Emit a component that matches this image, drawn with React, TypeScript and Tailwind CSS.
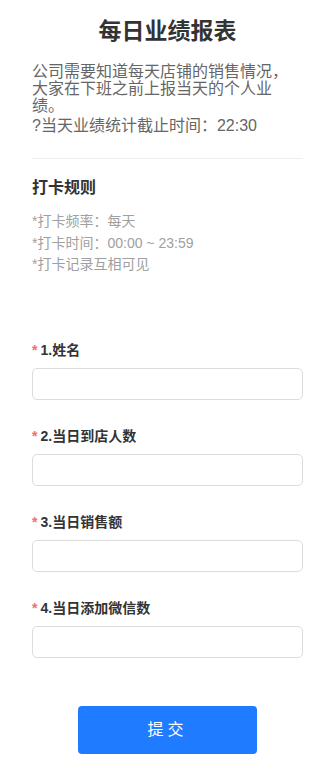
import React from "react";

const fields = ["1.姓名", "2.当日到店人数", "3.当日销售额", "4.当日添加微信数"];

const rules = ["*打卡频率：每天", "*打卡时间：00:00 ~ 23:59", "*打卡记录互相可见"];

export default function App() {
  return (
    <div
      className="min-h-[771px] bg-white px-8 pt-[15px] pb-4"
      style={{ fontFamily: '"Liberation Sans", "Noto Sans CJK SC", sans-serif' }}
    >
      {/* header */}
      <h1 className="text-center text-[23px] font-bold leading-[32px] text-[#333]">每日业绩报表</h1>

      <div className="mt-4 text-[16px] leading-[17px] text-[#666]">
        <p>公司需要知道每天店铺的销售情况，大家在下班之前上报当天的个人业绩。</p>
        <p className="mt-[3px]">?当天业绩统计截止时间：22:30</p>
      </div>

      <div className="mt-6 h-px bg-[#f0f0f0]" />

      {/* rules */}
      <h2 className="mt-[18px] text-[16px] font-bold leading-[22px] text-[#333]">打卡规则</h2>
      <div className="mt-[12px] text-[14px] leading-[21.5px] text-[#a0a0a0]">
        {rules.map((r) => (
          <p key={r}>{r}</p>
        ))}
      </div>

      {/* form */}
      <div className="mt-[64px] flex flex-col gap-[26px]">
        {fields.map((f) => (
          <div key={f}>
            <label className="flex items-center text-[14px] font-bold leading-[20px] text-[#333]">
              <span className="mr-[3px] text-[#f56c6c]">*</span>
              {f}
            </label>
            <input
              type="text"
              className="mt-2 block h-8 w-full rounded-[5px] border border-[#dcdcdc] px-3 text-sm outline-none"
            />
          </div>
        ))}
      </div>

      <div className="mt-12 flex justify-center">
        <button className="h-12 w-[179px] rounded-[4px] bg-[#1f7bff] text-[16px] tracking-[4px] text-white">
          提交
        </button>
      </div>
    </div>
  );
}
